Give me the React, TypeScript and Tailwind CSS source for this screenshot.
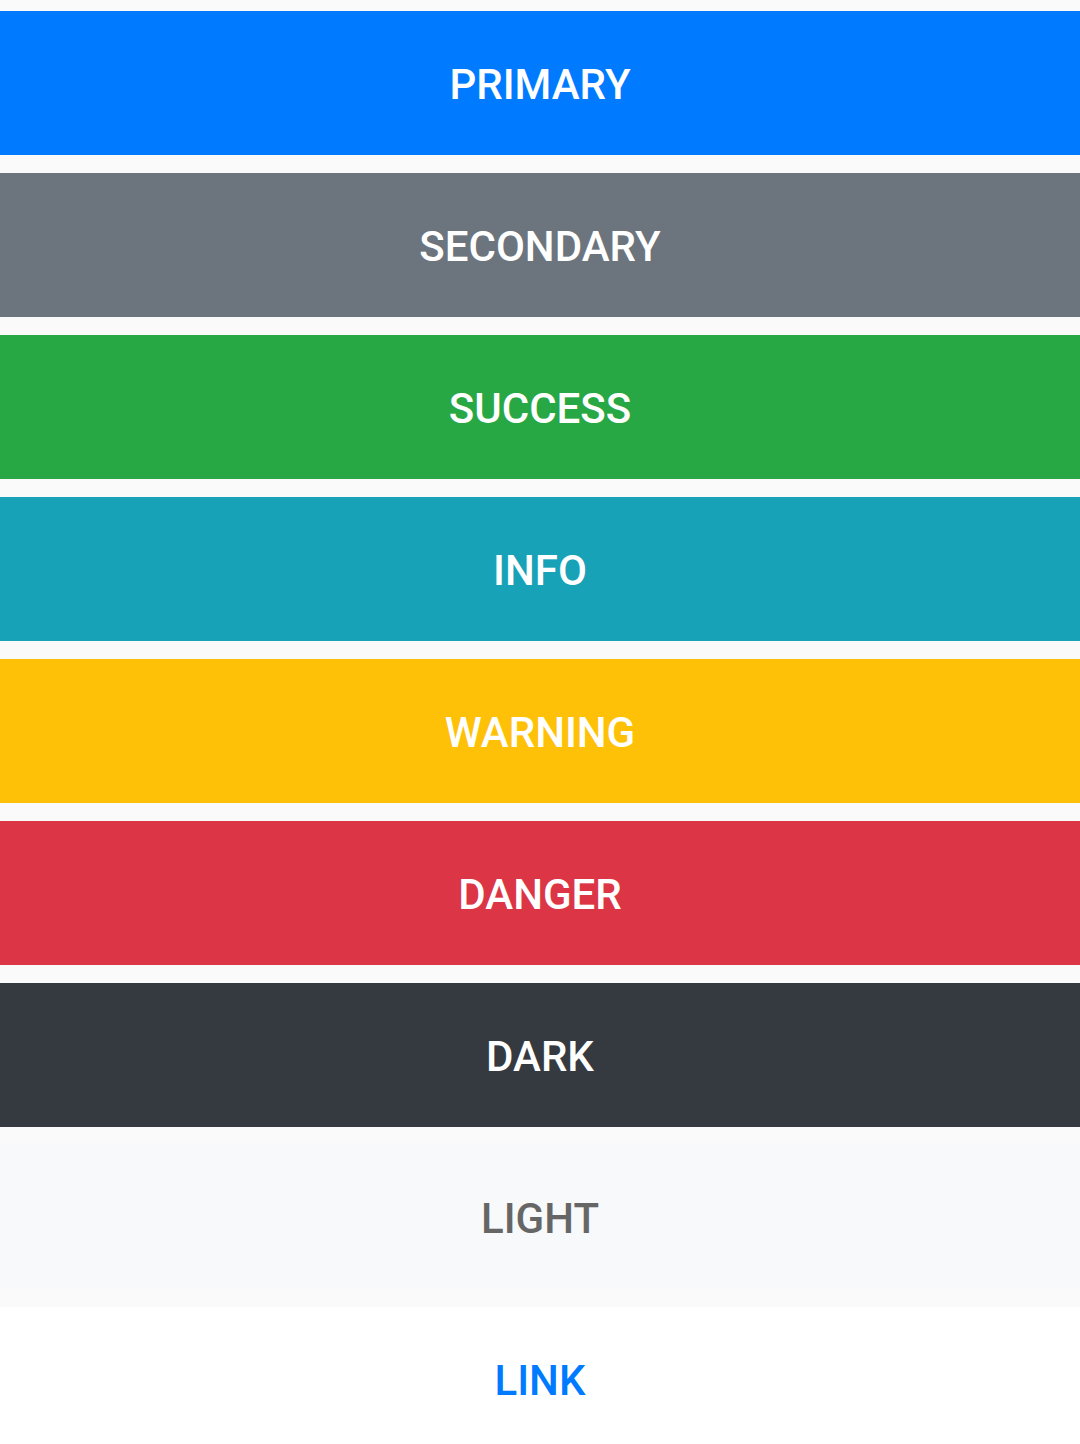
const buttons = [
  { label: 'PRIMARY', cls: 'bg-[#007bff] text-white' },
  { label: 'SECONDARY', cls: 'bg-[#6c757d] text-white' },
  { label: 'SUCCESS', cls: 'bg-[#28a745] text-white' },
  { label: 'INFO', cls: 'bg-[#17a2b8] text-white' },
  { label: 'WARNING', cls: 'bg-[#ffc107] text-white' },
  { label: 'DANGER', cls: 'bg-[#dc3545] text-white' },
  { label: 'DARK', cls: 'bg-[#343a40] text-white' },
  { label: 'LIGHT', cls: 'bg-[#f8f9fa] text-[#666666]' },
  { label: 'LINK', cls: 'bg-white text-[#007bff]' },
];

export default function App() {
  return (
    <div
      className="min-h-[1444px] bg-[#fafafa] pt-[11px] flex flex-col gap-[18px]"
      style={{ fontFamily: 'Roboto, "Noto Sans", sans-serif' }}
    >
      {buttons.map((b) => (
        <button
          key={b.label}
          className={`h-[144px] w-full shrink-0 flex items-center justify-center pt-[4px] text-[42px] leading-none font-medium ${b.cls}`}
        >
          {b.label}
        </button>
      ))}
    </div>
  );
}
